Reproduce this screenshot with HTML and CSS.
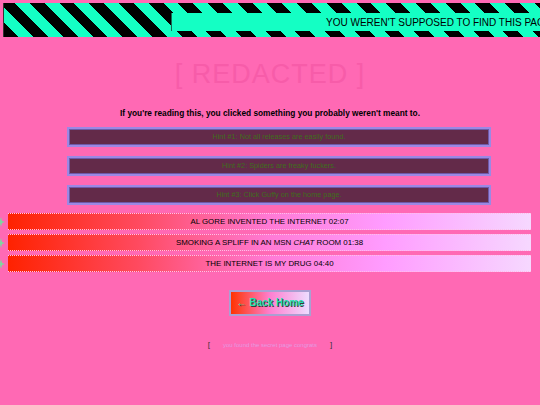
FILE: index.html
```html
<!DOCTYPE html>
<html>
<head>
<meta charset="utf-8">
<link rel="stylesheet" href="styles.css">
</head>
<body>
<div class="banner">
  <div class="ticker">YOU WEREN'T SUPPOSED TO FIND THIS PAGE.</div>
</div>
<h1 class="title">[ REDACTED ]</h1>
<p class="lead">If you're reading this, you clicked something you probably weren't meant to.</p>
<div class="hints">
  <div class="hint">Hint #1: Not all releases are easily found.</div>
  <div class="hint">Hint #2: Spiders are freaky fuckers.</div>
  <div class="hint">Hint #3: Click Guffy on the home page.</div>
</div>
<ul class="tracks">
  <li class="track"><span class="spark"><svg width="8" height="10" viewBox="0 0 8 10"><path d="M4 0 L5 4 L8 5 L5 6 L4 10 L3 6 L0 5 L3 4 Z" fill="#7fd6a0"/></svg></span><span class="bar">AL GORE INVENTED THE INTERNET 02:07</span></li>
  <li class="track"><span class="spark"><svg width="8" height="10" viewBox="0 0 8 10"><path d="M4 0 L5 4 L8 5 L5 6 L4 10 L3 6 L0 5 L3 4 Z" fill="#7fd6a0"/></svg></span><span class="bar">SMOKING A SPLIFF IN AN MSN <i>CHAT</i> ROOM 01:38</span></li>
  <li class="track"><span class="spark"><svg width="8" height="10" viewBox="0 0 8 10"><path d="M4 0 L5 4 L8 5 L5 6 L4 10 L3 6 L0 5 L3 4 Z" fill="#7fd6a0"/></svg></span><span class="bar">THE INTERNET IS MY DRUG 04:40</span></li>
</ul>
<div class="home-wrap"><a class="home" href="#">&larr; Back Home</a></div>
<div class="secret">[<span class="faint">you found the secret page congrats</span>]</div>
</body>
</html>
```
FILE: styles.css
```css
html, body {
  margin: 0;
  padding: 0;
}
body {
  background: #ff69b4;
  font-family: "Comic Sans MS", "Liberation Sans", sans-serif;
  overflow: hidden;
  width: 540px;
  height: 405px;
}
.banner {
  margin: 3px 0 0 3px;
  height: 34px;
  padding-top: 10px;
  box-sizing: border-box;
  background: repeating-linear-gradient(45deg, #000 0 10.5px, #14ffc4 10.5px 21px);
  border-left: 1px solid #333;
  overflow: hidden;
}
.ticker {
  margin-left: 167px;
  height: 18px;
  line-height: 19px;
  background: #14ffc4;
  border-left: 1px solid #1a6b55;
  padding-left: 154px;
  white-space: nowrap;
  overflow: hidden;
  font-size: 10px;
  color: #000;
}
.title {
  margin: 18px 0 0;
  height: 38px;
  line-height: 38px;
  font-size: 27px;
  font-weight: normal;
  text-align: center;
  color: #f75ca9;
  letter-spacing: 1px;
}
.lead {
  margin: 13px 0 0;
  line-height: 14px;
  font-size: 8.3px;
  font-weight: bold;
  text-align: center;
  color: #000;
}
.hints {
  margin: 7px 0 0 67px;
  width: 424px;
  display: flex;
  flex-direction: column;
  gap: 9px;
}
.hint {
  height: 20px;
  box-sizing: border-box;
  background: #632a49;
  border: 2px solid #9b88e4;
  box-shadow: inset 0 0 0 1px #6f5aa8;
  color: #3e6e1c;
  font-size: 7.3px;
  line-height: 16px;
  text-align: center;
}
.tracks {
  list-style: none;
  margin: 8px 0 0;
  padding: 0;
  display: flex;
  flex-direction: column;
  gap: 4px;
}
.track {
  display: flex;
  align-items: center;
  height: 17px;
}
.spark {
  width: 8px;
  display: flex;
  justify-content: flex-start;
  margin-left: -3px;
  margin-right: 3px;
}
.bar {
  width: 523px;
  height: 17px;
  box-sizing: border-box;
  border-top: 1px dotted #ffc0e8;
  border-bottom: 1px dotted #ffc0e8;
  background: linear-gradient(to right, #ff2200 0%, #ff4a60 25%, #ff7ad6 50%, #ff9cff 72%, #f6d8ff 100%);
  font-size: 7.9px;
  line-height: 15px;
  text-align: center;
  color: #000;
}
.home-wrap {
  margin-top: 18px;
  display: flex;
  justify-content: center;
}
.home {
  width: 82px;
  height: 26px;
  box-sizing: border-box;
  border: 2px solid #ab9fd2;
  background: linear-gradient(to right, #ff3300 0%, #ff7fd0 50%, #eedcff 100%);
  color: #1fe0b0;
  font-weight: bold;
  font-size: 10px;
  line-height: 22px;
  text-align: center;
  text-decoration: none;
  text-shadow: 1px 1px 0 #3a3a3a;
}
.secret {
  margin-top: 23px;
  text-align: center;
  font-size: 8px;
  line-height: 12px;
  color: #333;
}
.faint {
  display: inline-block;
  width: 116px;
  margin: 0 2px;
  color: #e59ae0;
  font-size: 6px;
  white-space: nowrap;
  overflow: hidden;
  vertical-align: top;
}
```
